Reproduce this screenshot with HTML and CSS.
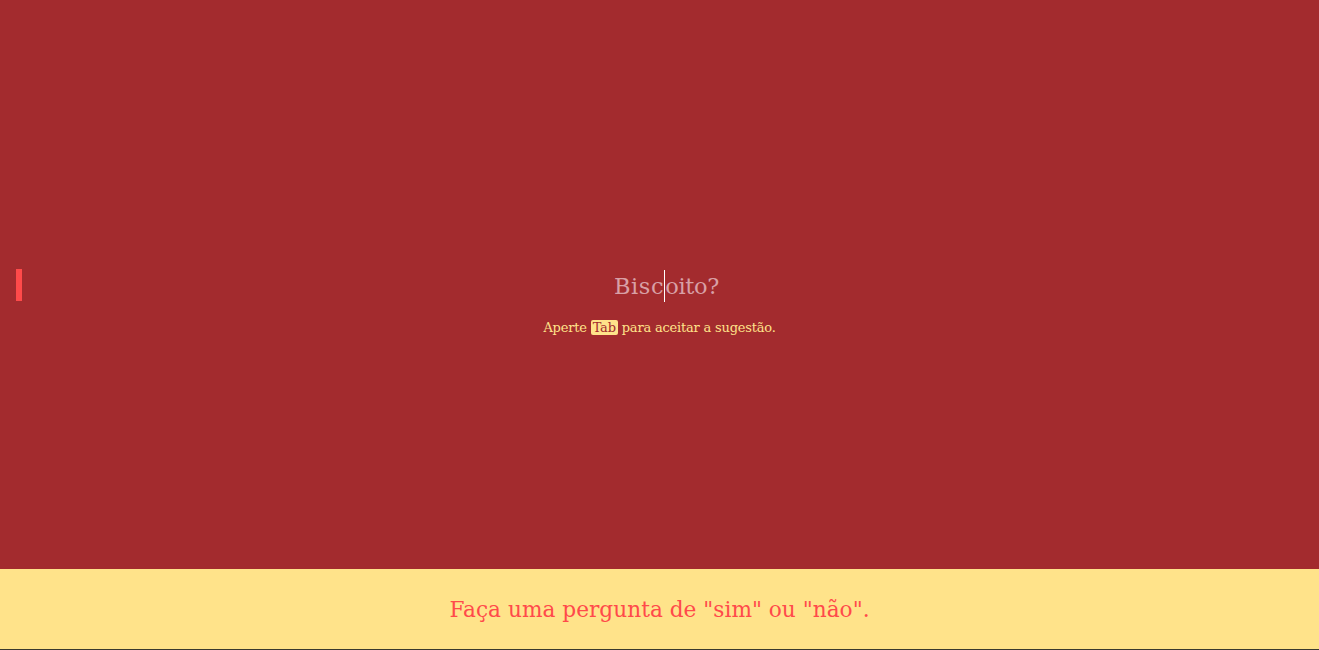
FILE: index.html
```html
<!DOCTYPE html>
<html lang="pt">
<head>
<meta charset="utf-8">
<title>Biscoito</title>
<link rel="stylesheet" href="styles.css">
</head>
<body>
<div class="app">
  <main class="stage">
    <div class="marker"></div>
    <div class="center">
      <div class="question"><span class="typed">Bisc</span><span class="caret"></span><span class="ghost">oito?</span></div>
      <p class="hint">Aperte <kbd class="key">Tab</kbd> para aceitar a sugestão.</p>
    </div>
  </main>
  <footer class="footer">
    <p class="prompt">Faça uma pergunta de "sim" ou "não".</p>
  </footer>
</div>
</body>
</html>
```

FILE: styles.css
```css
* { box-sizing: border-box; }
html, body { margin: 0; padding: 0; height: 100%; }
body {
  background: #3a3a2e;
  font-family: "DejaVu Serif", "Liberation Serif", serif;
}
.app {
  height: 649px;
  display: flex;
  flex-direction: column;
}
.stage {
  flex: 1;
  background: #a32b2e;
  position: relative;
  display: flex;
  align-items: center;
  justify-content: center;
}
.marker {
  position: absolute;
  left: 16px;
  top: 269px;
  width: 6px;
  height: 32px;
  background: #ff4a4a;
}
.center {
  display: flex;
  flex-direction: column;
  align-items: center;
  margin-top: 36px;
}
.question {
  height: 32px;
  display: flex;
  align-items: center;
  padding-left: 14px;
  font-size: 22.5px;
  color: #d8a0a6;
  letter-spacing: -0.3px;
}
.typed {
  letter-spacing: 0.6px;
}
.caret {
  display: inline-block;
  width: 1px;
  height: 32px;
  background: #ffffff;
}
.hint {
  margin: 18px 0 0;
  font-size: 13px;
  color: #ffe38a;
  letter-spacing: -0.2px;
}
.key {
  font-family: inherit;
  font-size: 13px;
  background: #ffe38a;
  color: #a32b2e;
  border-radius: 2px;
  padding: 0 2px;
}
.footer {
  height: 80px;
  flex: none;
  background: #ffe38a;
  display: flex;
  align-items: center;
  justify-content: center;
}
.prompt {
  margin: 0;
  font-size: 21.7px;
  color: #ff4a4a;
}
```
